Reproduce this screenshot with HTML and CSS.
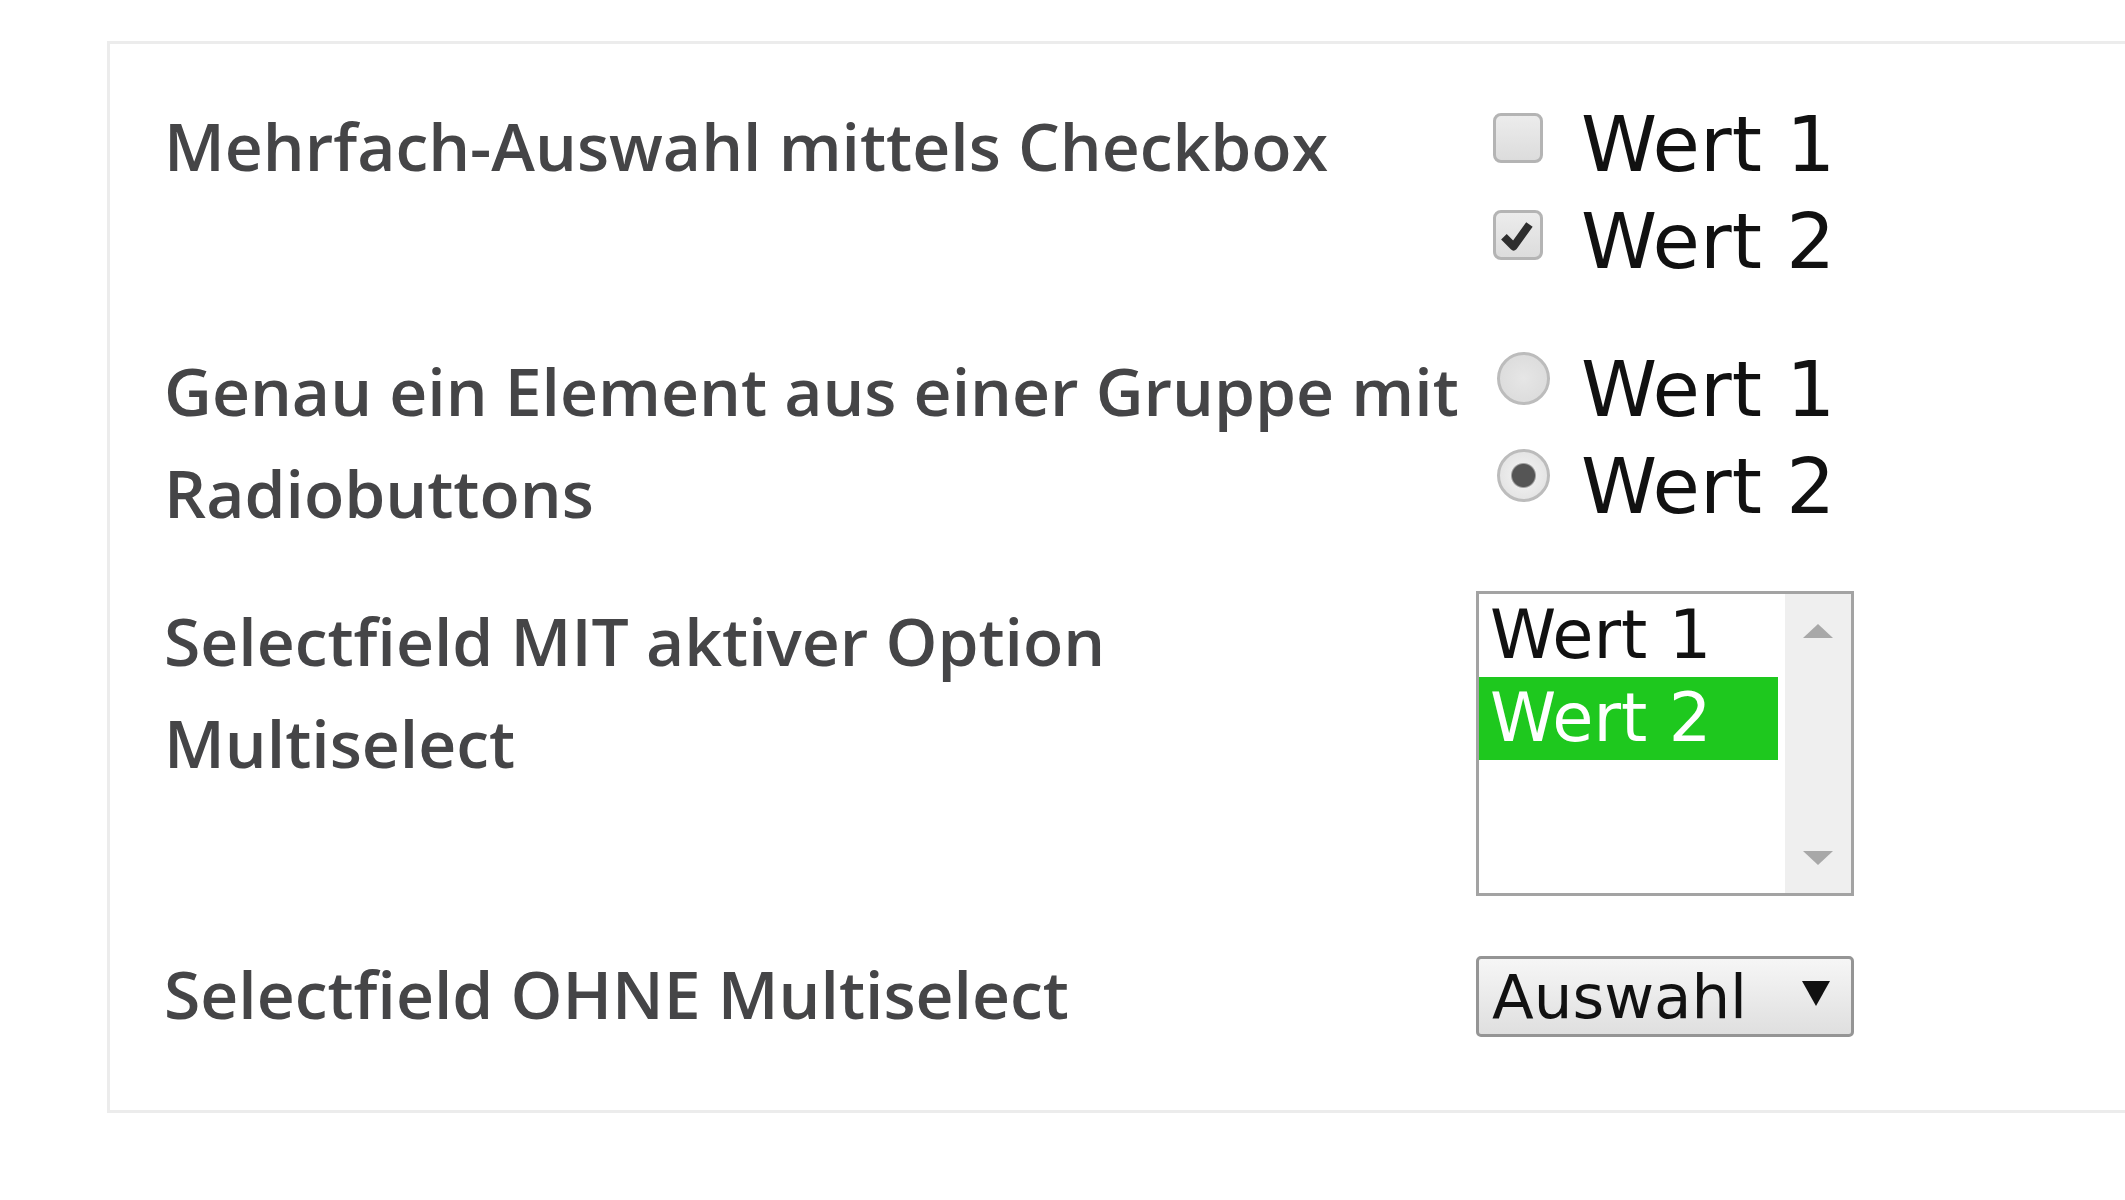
FILE: index.html
```html
<!DOCTYPE html>
<html lang="de">
<head>
  <meta charset="UTF-8" />
  <meta name="viewport" content="width=device-width, initial-scale=1.0" />
  <title>Formular - Auswahlfelder</title>
  <link rel="stylesheet" href="styles.css">
</head>
<body>
  <div class="panel">
    <form class="form">

      <div class="form-row">
        <div class="form-label">Mehrfach-Auswahl mittels Checkbox</div>
        <div class="form-field">
          <label class="choice">
            <input type="checkbox" name="multi" value="1">
            <span class="check"><svg viewBox="0 0 50 50"><path d="M9 27 L20 38 L38 13" /></svg></span>
            Wert 1
          </label>
          <label class="choice">
            <input type="checkbox" name="multi" value="2" checked>
            <span class="check"><svg viewBox="0 0 50 50"><path d="M9 27 L20 38 L38 13" /></svg></span>
            Wert 2
          </label>
        </div>
      </div>

      <div class="form-row">
        <div class="form-label">Genau ein Element aus einer Gruppe mit<br>Radiobuttons</div>
        <div class="form-field">
          <label class="choice">
            <input type="radio" name="single" value="1">
            <span class="radio"></span>
            Wert 1
          </label>
          <label class="choice">
            <input type="radio" name="single" value="2" checked>
            <span class="radio"></span>
            Wert 2
          </label>
        </div>
      </div>

      <div class="form-row">
        <div class="form-label">Selectfield MIT aktiver Option<br>Multiselect</div>
        <div class="form-field">
          <div class="listbox">
            <ul class="listbox-options">
              <li>Wert 1</li>
              <li class="selected">Wert 2</li>
            </ul>
            <div class="scrollbar">
              <span class="arrow-up"></span>
              <span class="arrow-down"></span>
            </div>
          </div>
        </div>
      </div>

      <div class="form-row">
        <div class="form-label">Selectfield OHNE Multiselect</div>
        <div class="form-field">
          <div class="dropdown">
            <select name="auswahl">
              <option>Auswahl</option>
              <option>Wert 1</option>
              <option>Wert 2</option>
            </select>
          </div>
        </div>
      </div>

    </form>
  </div>
</body>
</html>
```

FILE: styles.css
```css
body {
  margin: 0;
  background: #fff;
  font-family: "DejaVu Sans", Verdana, sans-serif;
  color: #111;
}
.panel {
  margin: 41px 0 0 107px;
  border: 3px solid #ececec;
  border-right: none;
  padding: 50px 0 66px 54px;
}
.form-row {
  display: grid;
  grid-template-columns: 1312px 1fr;
  align-items: start;
  margin-bottom: 46px;
}
.form-row:first-child {
  margin-bottom: 49px;
}
.form-row:last-child {
  margin-bottom: 0;
}
.form-label {
  font-family: "Open Sans", sans-serif;
  font-weight: 600;
  font-size: 66px;
  line-height: 102px;
  color: #454547;
}

/* checkbox + radio */
.choice {
  display: flex;
  align-items: center;
  height: 97px;
  font-size: 77px;
  color: #111;
}
.choice:first-child {
  margin-top: 2px;
}
.choice input {
  display: none;
}
.check {
  box-sizing: border-box;
  width: 50px;
  height: 50px;
  margin: 0 38px 14px 17px;
  border: 3px solid #b4b4b4;
  border-radius: 8px;
  background: linear-gradient(#ececec, #dcdcdc);
}
.check svg {
  display: none;
  width: 44px;
  height: 44px;
}
.check path {
  fill: none;
  stroke: #2e2e2e;
  stroke-width: 9;
  stroke-linejoin: round;
}
input:checked + .check svg {
  display: block;
}
.radio {
  box-sizing: border-box;
  width: 53px;
  height: 53px;
  margin: 0 31px 22px 21px;
  border: 3px solid #bcbcbc;
  border-radius: 50%;
  background: radial-gradient(circle, #e6e6e6, #d9d9d9);
}
input:checked + .radio {
  background: radial-gradient(circle, #555 0, #555 11px, #ececec 13px, #dedede 100%);
}

/* listbox with multiselect */
.listbox {
  box-sizing: border-box;
  display: flex;
  width: 378px;
  height: 305px;
  margin-top: 2px;
  border: 3px solid #a3a3a3;
  background: #fff;
  font-size: 67px;
}
.listbox-options {
  list-style: none;
  margin: 0 7px 0 0;
  padding: 0;
  width: 299px;
}
.listbox-options li {
  height: 83px;
  line-height: 83px;
  padding-left: 11px;
  color: #111;
}
.listbox-options li.selected {
  background: #1ec81e;
  color: #fff;
}
.scrollbar {
  width: 66px;
  background: #efefef;
  display: flex;
  flex-direction: column;
  justify-content: space-between;
  align-items: center;
  padding: 30px 0 28px;
}
.arrow-up,
.arrow-down {
  width: 0;
  height: 0;
  border-left: 15px solid transparent;
  border-right: 15px solid transparent;
}
.arrow-up {
  border-bottom: 14px solid #a8a8a8;
}
.arrow-down {
  border-top: 14px solid #a8a8a8;
}

/* dropdown */
.dropdown {
  position: relative;
  width: 378px;
  margin-top: 14px;
}
.dropdown select {
  appearance: none;
  box-sizing: border-box;
  width: 100%;
  height: 81px;
  padding: 0 0 0 13px;
  border: 3px solid #959595;
  border-radius: 5px;
  background: linear-gradient(#f6f6f6, #dfdfdf);
  font-family: "DejaVu Sans", Verdana, sans-serif;
  font-size: 61px;
  color: #111;
}
.dropdown::after {
  content: "";
  position: absolute;
  right: 24px;
  top: 25px;
  border-left: 14px solid transparent;
  border-right: 14px solid transparent;
  border-top: 25px solid #111;
  pointer-events: none;
}
```
